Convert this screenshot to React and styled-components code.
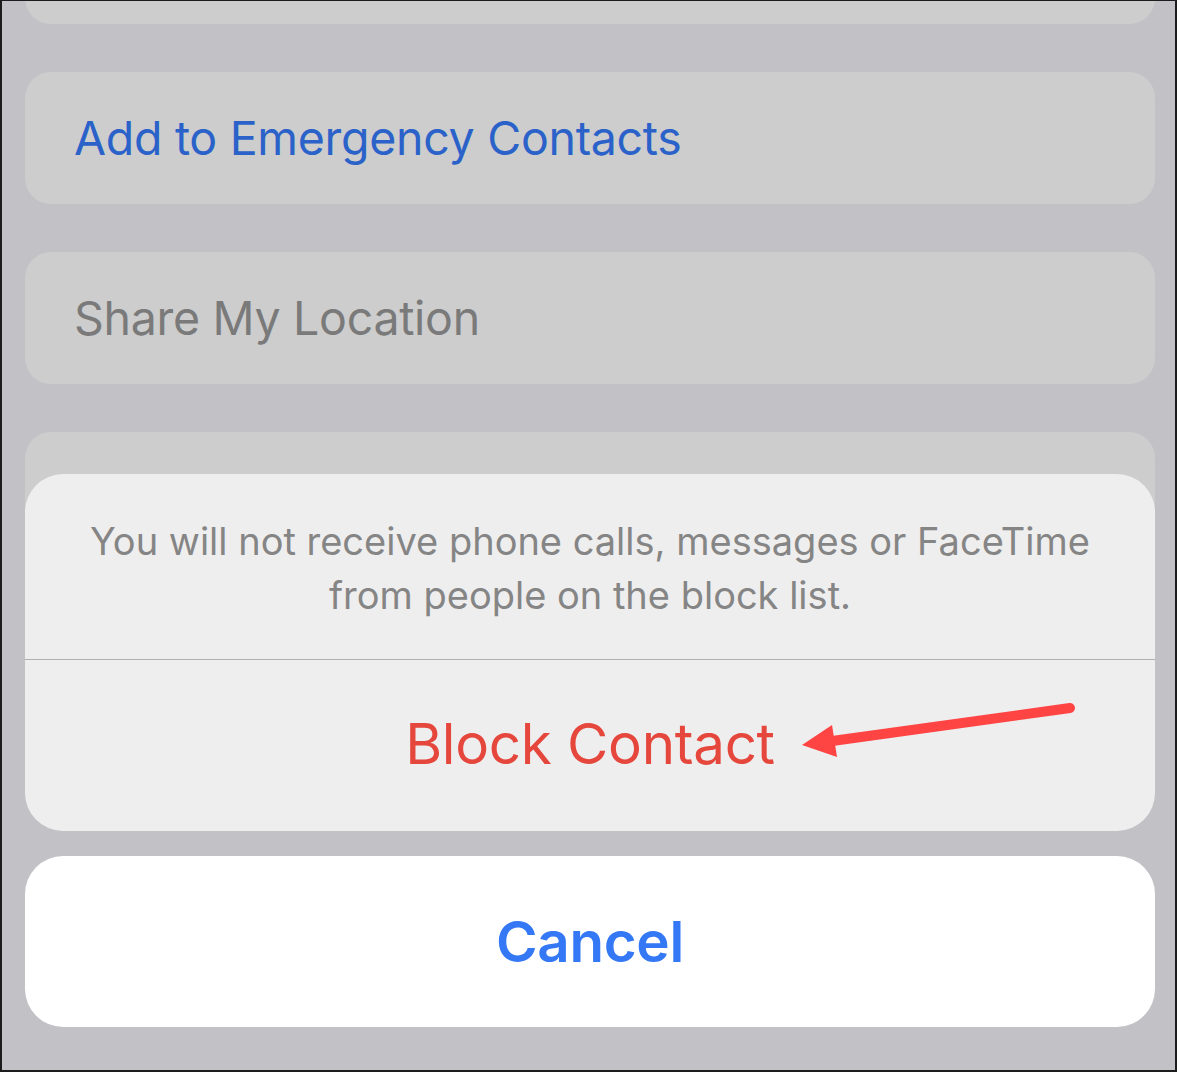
import React from 'react';
import styled, { createGlobalStyle } from 'styled-components';

const GlobalStyle = createGlobalStyle`
  html, body {
    margin: 0;
    padding: 0;
    background: #ffffff;
  }
  body {
    font-family: 'Inter', 'Noto Sans', sans-serif;
    -webkit-font-smoothing: antialiased;
  }
`;

const Frame = styled.div`
  position: relative;
  width: 1177px;
  height: 1072px;
  box-sizing: border-box;
  border: 2px solid #1c1c1c;
  border-top-width: 1px;
  background: #c2c1c6;
  overflow: hidden;
  padding: 0 20px 0 23px;
`;

const OptionList = styled.div`
  display: flex;
  flex-direction: column;
  gap: 48px;
  margin-top: -109px;
`;

const OptionCard = styled.div`
  height: 132px;
  border-radius: 26px;
  background: #cdcdcd;
  display: flex;
  align-items: center;
  padding-left: 49px;
  font-size: 46.5px;
  letter-spacing: -0.3px;
  color: ${props => props.color || '#7a7a7a'};
`;

const Overlay = styled.div`
  position: absolute;
  left: 23px;
  right: 20px;
  bottom: 43px;
  display: flex;
  flex-direction: column;
  gap: 25px;
`;

const ActionGroup = styled.div`
  position: relative;
  background: #efeeee;
  border-radius: 38px;
  overflow: hidden;
`;

const Message = styled.div`
  height: 186px;
  box-sizing: border-box;
  padding: 40px 40px 0;
  text-align: center;
  font-size: 38px;
  line-height: 54px;
  color: #858585;
  border-bottom: 1px solid #b0b0b0;
`;

const ActionButton = styled.div`
  height: ${props => props.h || 170}px;
  display: flex;
  align-items: center;
  justify-content: center;
  font-size: 56.5px;
  letter-spacing: -0.3px;
  color: ${props => props.color};
  font-weight: ${props => props.weight || 400};
  padding-bottom: ${props => props.lift || 0}px;
  box-sizing: border-box;
`;

const CancelCard = styled.div`
  background: #ffffff;
  border-radius: 38px;
`;

const Arrow = styled.svg`
  position: absolute;
  left: 0;
  top: 0;
  pointer-events: none;
`;

export default function App() {
  return (
    <>
      <GlobalStyle />
      <Frame>
        <OptionList>
          <OptionCard />
          <OptionCard color="#2a62c9">Add to Emergency Contacts</OptionCard>
          <OptionCard color="#7a7a7a">Share My Location</OptionCard>
          <OptionCard />
        </OptionList>
        <Overlay>
          <ActionGroup>
            <Message>
              You will not receive phone calls, messages or FaceTime from people on the block list.
            </Message>
            <ActionButton color="#e5473c" lift={4} h={171}>Block Contact</ActionButton>
            {/* annotation arrow, coords relative to the sheet (left 25, top 474) */}
            <Arrow width="1130" height="357" viewBox="0 0 1130 357">
              <line x1="1045" y1="234" x2="800" y2="268" stroke="#ff4444" strokeWidth="10" strokeLinecap="round" />
              <polygon points="777,271 807,251 812,283" fill="#ff4444" />
            </Arrow>
          </ActionGroup>
          <CancelCard>
            <ActionButton color="#3478f6" weight={600} h={171}>Cancel</ActionButton>
          </CancelCard>
        </Overlay>
      </Frame>
    </>
  );
}
